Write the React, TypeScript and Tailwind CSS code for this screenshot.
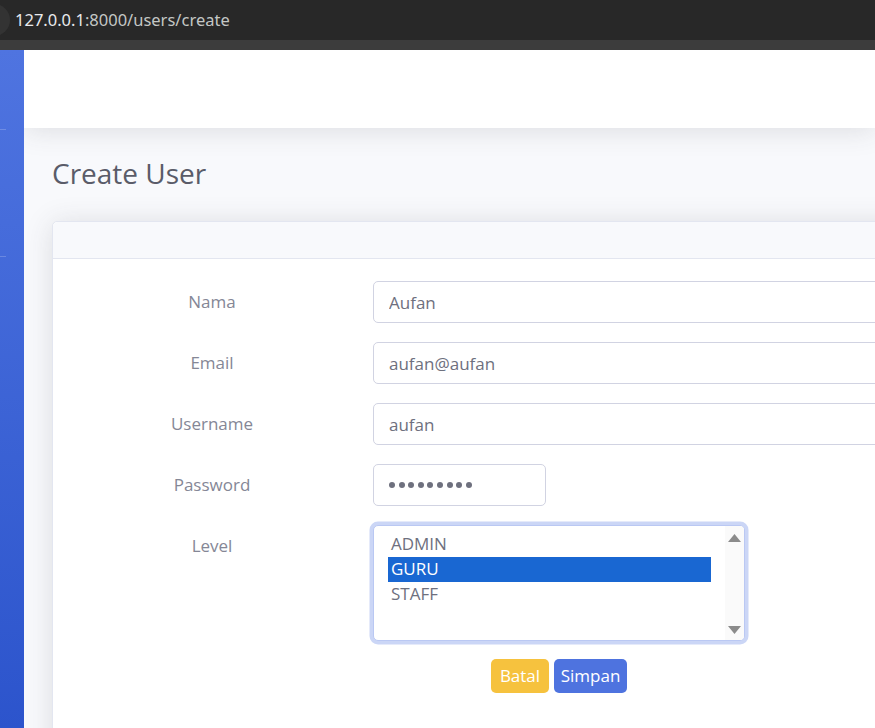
import React from 'react'

const font = { fontFamily: '"Open Sans", "Noto Sans", sans-serif' }

type Field = { label: string; value: string; secret?: boolean }

const fields: Field[] = [
  { label: 'Nama', value: 'Aufan' },
  { label: 'Email', value: 'aufan@aufan' },
  { label: 'Username', value: 'aufan' },
  { label: 'Password', value: 'aufan1234', secret: true },
]

const levels = ['ADMIN', 'GURU', 'STAFF']

function FormRow({ label, children }: { label: string; children: React.ReactNode }) {
  return (
    <div className="flex items-start mb-[19px]">
      <label className="w-[278px] flex-none text-center text-[17px] leading-6 pt-[9px] text-[#858796]">{label}</label>
      <div className="ml-[22px] flex-1 flex">{children}</div>
    </div>
  )
}

export default function App() {
  return (
    <div className="w-[875px] h-[728px] overflow-hidden flex flex-col bg-[#f8f9fc]" style={font}>
      {/* browser chrome */}
      <div className="h-[40px] flex-none bg-[#282828] flex items-center relative">
        <div className="absolute -left-[22px] top-[4px] w-[32px] h-[32px] rounded-full bg-[#333333]" />
        <span className="ml-[15px] text-[16.5px]" style={{ fontFamily: '"Noto Sans", sans-serif' }}>
          <span className="text-[#e8eaed]">127.0.0.1</span>
          <span className="text-[#c4c7c5]">:8000/users/create</span>
        </span>
      </div>
      <div className="h-[10px] flex-none bg-[#3c3c3c]" />

      <div className="flex flex-1 min-h-0">
        {/* sidebar */}
        <div className="w-[24px] flex-none bg-gradient-to-b from-[#4f74e0] to-[#2c54cc] flex flex-col">
          <div className="mt-[79px] h-px w-[6px] bg-white/20" />
          <div className="mt-[126px] h-px w-[6px] bg-white/20" />
        </div>

        {/* main */}
        <div className="flex-1 min-w-0 overflow-hidden flex flex-col">
          <div className="h-[78px] flex-none w-full bg-white shadow-[0_2px_28px_0_rgba(58,59,69,0.15)] relative z-10" />

          <div className="pl-[28px] pt-[28px]">
            <h1 className="text-[28px] leading-[34px] font-normal text-[#5a5c69] mb-[31px]">Create User</h1>

            <div className="w-[1000px] rounded-[5px] border border-[#e3e6f0] bg-white shadow-[0_2px_28px_0_rgba(58,59,69,0.15)] h-[600px]">
              <div className="h-[37px] bg-[#f8f9fc] border-b border-[#e3e6f0] rounded-t-[5px]" />
              <div className="pt-[22px] pl-[20px] pr-[20px]">
                {fields.map((f) =>
                  f.secret ? (
                    <FormRow key={f.label} label={f.label}>
                      <div className="w-[173px] h-[42px] flex-none rounded-[5px] border border-[#d1d3e2] bg-white pl-[15px] flex items-center gap-[3.6px]">
                        {f.value.split('').map((_, i) => (
                          <span key={i} className="w-[6px] h-[6px] rounded-full bg-[#6e707e]" />
                        ))}
                      </div>
                    </FormRow>
                  ) : (
                    <FormRow key={f.label} label={f.label}>
                      <input
                        readOnly
                        type="text"
                        value={f.value}
                        className="flex-1 h-[42px] rounded-[5px] border border-[#d1d3e2] bg-white px-[15px] text-[17px] text-[#6e707e] outline-none"
                        style={font}
                      />
                    </FormRow>
                  )
                )}

                <FormRow label="Level">
                  <div className="w-[372px] flex-none">
                    <div className="h-[116px] rounded-[5px] border border-[#bac8f3] bg-white shadow-[0_0_0_3.5px_rgba(186,200,243,0.75)] flex">
                      <div className="flex-1 pl-[14px] pr-[14px] pt-[6px]">
                        {levels.map((l) => (
                          <div
                            key={l}
                            className={`h-[25px] leading-[24px] pl-[3px] text-[17px] ${
                              l === 'GURU' ? 'bg-[#1967d2] text-white' : 'text-[#6e707e]'
                            }`}
                          >
                            {l}
                          </div>
                        ))}
                      </div>
                      <div className="w-[19px] flex-none bg-[#fafafa] flex flex-col justify-between items-center pt-[8px] pb-[6px] rounded-r-[4px]">
                        <svg width="13" height="8" viewBox="0 0 13 8">
                          <path d="M6.5 0 L13 8 L0 8 Z" fill="#8b8b8b" />
                        </svg>
                        <svg width="13" height="8" viewBox="0 0 13 8">
                          <path d="M0 0 L13 0 L6.5 8 Z" fill="#8b8b8b" />
                        </svg>
                      </div>
                    </div>
                    <div className="flex justify-center gap-[5px] mt-[18px]">
                      <button className="h-[34px] w-[58px] rounded-[5px] bg-[#f6c23e] text-white text-[17px]" style={font}>
                        Batal
                      </button>
                      <button className="h-[34px] w-[73px] rounded-[5px] bg-[#4e73df] text-white text-[17px]" style={font}>
                        Simpan
                      </button>
                    </div>
                  </div>
                </FormRow>
              </div>
            </div>
          </div>
        </div>
      </div>
    </div>
  )
}
